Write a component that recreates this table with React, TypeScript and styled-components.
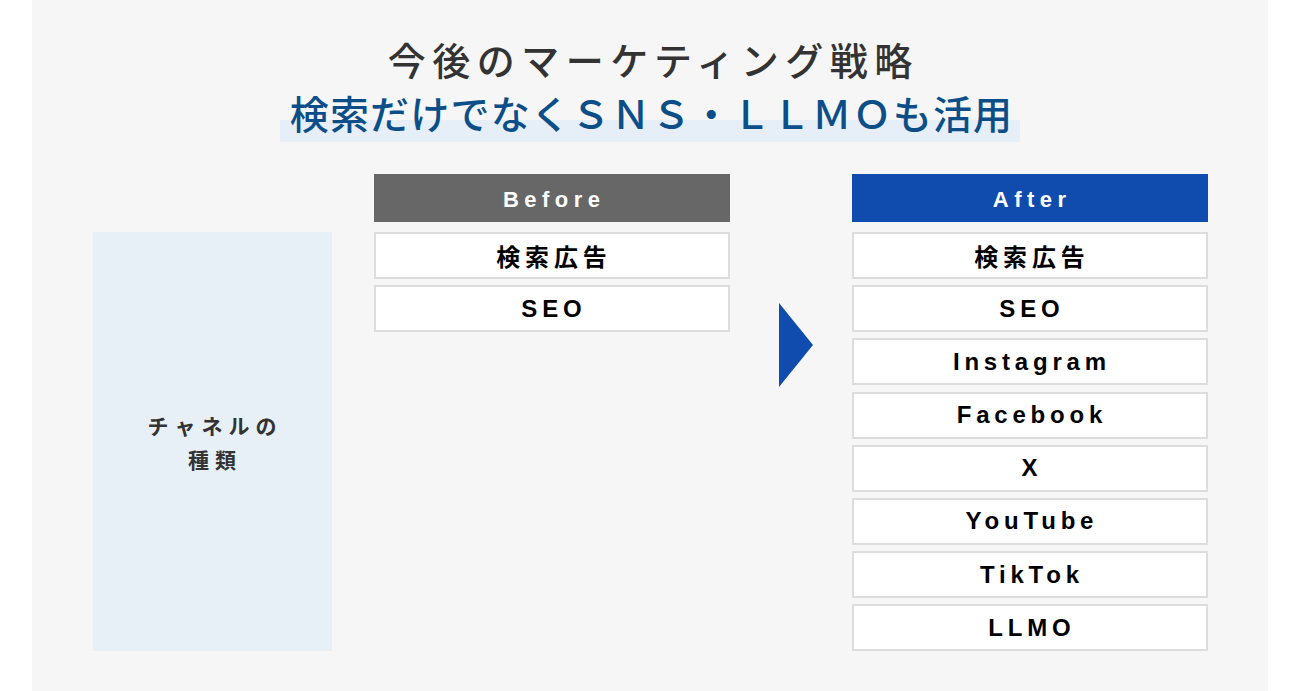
import React from 'react'
import styled, { createGlobalStyle } from 'styled-components'

const GlobalStyle = createGlobalStyle`
  html, body {
    margin: 0;
    padding: 0;
    background: #ffffff;
  }
  body {
    font-family: "Noto Sans CJK JP", "Noto Sans", sans-serif;
  }
`

const Panel = styled.section`
  margin: 0 32px;
  min-height: 691px;
  background: #f6f6f6;
  padding-top: 34px;
  box-sizing: border-box;
`

const Heading = styled.h2`
  margin: 0;
  text-align: center;
  font-family: "Noto Sans CJK JP", sans-serif;
  font-size: 38px;
  font-weight: 500;
  line-height: 50px;
  letter-spacing: 6.5px;
  padding-left: 6.5px;
  color: #333333;
`

const SubRow = styled.div`
  display: flex;
  justify-content: center;
  margin-top: 5px;
`

const Highlight = styled.span`
  display: inline-block;
  font-family: "Noto Sans CJK JP", sans-serif;
  font-size: 39px;
  font-weight: 500;
  line-height: 46px;
  letter-spacing: 1.2px;
  color: #0c4f88;
  padding: 0 7px 7px 10px;
  background: linear-gradient(transparent 31px, #e6eef8 31px);
`

const Table = styled.div`
  display: grid;
  grid-template-columns: 281px 356px 122px 356px;
  grid-template-rows: 48px auto;
  row-gap: 10px;
  width: 1115px;
  margin: 32px auto 0;
`

const ColHead = styled.div<{ $tone: 'before' | 'after' }>`
  display: flex;
  align-items: center;
  justify-content: center;
  background: ${({ $tone }) => ($tone === 'after' ? '#0f4cad' : '#676767')};
  color: #ffffff;
  font-family: "Liberation Sans", Arial, sans-serif;
  font-size: 22px;
  font-weight: 700;
  letter-spacing: 0.25em;
  padding: 3px 0 0 0.25em;
`

const Label = styled.div`
  width: 239px;
  background: #e7eff7;
  display: flex;
  align-items: center;
  justify-content: center;
  text-align: center;
  font-family: "Noto Sans CJK JP", sans-serif;
  font-size: 21px;
  font-weight: 700;
  line-height: 34px;
  letter-spacing: 6px;
  padding-left: 6px;
  box-sizing: border-box;
  color: #333333;
`

const List = styled.div`
  display: flex;
  flex-direction: column;
  gap: 6.2px;
`

const Item = styled.div`
  height: 47px;
  box-sizing: border-box;
  border: 2px solid #dddddd;
  background: #ffffff;
  display: flex;
  align-items: center;
  justify-content: center;
  font-family: "Liberation Sans", Arial, "Noto Sans CJK JP", sans-serif;
  font-size: 24px;
  font-weight: 700;
  letter-spacing: 0.2em;
  padding: 0 0 0 0.2em;
  color: #000000;
`

const ArrowCell = styled.div`
  padding: 71px 0 0 49px;
`

const Arrow = styled.div`
  width: 0;
  height: 0;
  border-left: 34px solid #0f4cad;
  border-top: 42px solid transparent;
  border-bottom: 42px solid transparent;
`

const before = ['検索広告', 'SEO']
const after = ['検索広告', 'SEO', 'Instagram', 'Facebook', 'X', 'YouTube', 'TikTok', 'LLMO']

export default function App() {
  return (
    <>
      <GlobalStyle />
      <Panel>
        <Heading>今後のマーケティング戦略</Heading>
        <SubRow>
          <Highlight>検索だけでなくＳＮＳ・ＬＬＭＯも活用</Highlight>
        </SubRow>
        <Table>
          <div />
          <ColHead $tone="before">Before</ColHead>
          <div />
          <ColHead $tone="after">After</ColHead>
          <Label>
            チャネルの
            <br />
            種類
          </Label>
          <List>
            {before.map((t) => (
              <Item key={t}>{t}</Item>
            ))}
          </List>
          <ArrowCell>
            <Arrow />
          </ArrowCell>
          <List>
            {after.map((t) => (
              <Item key={t}>{t}</Item>
            ))}
          </List>
        </Table>
      </Panel>
    </>
  )
}
